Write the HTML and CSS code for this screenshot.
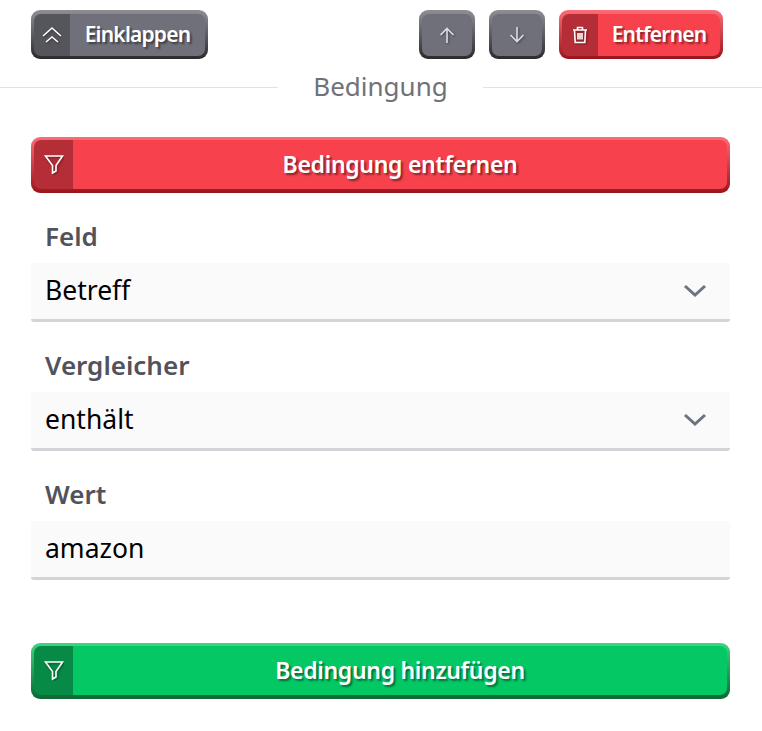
FILE: index.html
```html
<!DOCTYPE html>
<html lang="de">
<head>
    <meta charset="UTF-8">
    <title>Bedingung</title>
    <link rel="stylesheet" href="styles.css">
</head>
<body>
    <div class="toolbar">
        <button class="btn btn-grey btn-collapse">
            <span class="btn-icon">
                <svg width="20" height="20" viewBox="0 0 20 20"><path d="M1 11 10 3 19 11M4 17 10 12 16 17" /></svg>
            </span>
            <span class="btn-text">Einklappen</span>
        </button>
        <div class="toolbar-right">
            <button class="btn btn-grey btn-square">
                <span class="btn-face">
                    <svg width="20" height="20" viewBox="0 0 20 20"><path d="M10 18V3.500M3.500 10 10 3.500 16.500 10" /></svg>
                </span>
            </button>
            <button class="btn btn-grey btn-square">
                <span class="btn-face">
                    <svg width="20" height="20" viewBox="0 0 20 20"><path d="M10 2V16.500M3.500 10 10 16.500 16.500 10" /></svg>
                </span>
            </button>
            <button class="btn btn-red btn-remove">
                <span class="btn-icon">
                    <svg width="20" height="20" viewBox="0 0 20 20"><path d="M3 5h14M7.500 5V2.500h5V5M4.500 5l.7 12.500h9.600L15.500 5M8 8v6.500M10 8v6.500M12 8v6.500" /></svg>
                </span>
                <span class="btn-text">Entfernen</span>
            </button>
        </div>
    </div>

    <div class="divider"><span>Bedingung</span></div>

    <div class="form">
        <button class="btn btn-red btn-wide">
            <span class="btn-icon">
                <svg width="20" height="20" viewBox="0 0 20 20"><path d="M1.500 1H18.500L12 10.500V16L8.500 18V10.500Z" /></svg>
            </span>
            <span class="btn-text">Bedingung entfernen</span>
        </button>

        <div class="field">
            <label>Feld</label>
            <div class="input">
                Betreff
                <svg class="chevron" width="24" height="24" viewBox="0 0 24 24"><path d="M2 7 12 16 22 7" /></svg>
            </div>
        </div>
        <div class="field">
            <label>Vergleicher</label>
            <div class="input">
                enthält
                <svg class="chevron" width="24" height="24" viewBox="0 0 24 24"><path d="M2 7 12 16 22 7" /></svg>
            </div>
        </div>
        <div class="field">
            <label>Wert</label>
            <div class="input">amazon</div>
        </div>

        <button class="btn btn-green btn-wide btn-add">
            <span class="btn-icon">
                <svg width="20" height="20" viewBox="0 0 20 20"><path d="M1.500 1H18.500L12 10.500V16L8.500 18V10.500Z" /></svg>
            </span>
            <span class="btn-text">Bedingung hinzufügen</span>
        </button>
    </div>
</body>
</html>
```

FILE: styles.css
```css
* {
    box-sizing: border-box;
}
body {
    margin: 0;
    background: #fff;
    font-family: "Noto Sans", "Open Sans", sans-serif;
}
.toolbar {
    display: flex;
    justify-content: space-between;
    padding: 10px 39px 0 31px;
}
.toolbar-right {
    display: flex;
    gap: 14px;
}
.btn {
    display: flex;
    align-items: stretch;
    padding: 4px 3px 3px;
    border: none;
    border-radius: 9px;
    color: #fff;
    font-family: inherit;
    font-size: 21px;
    font-weight: 600;
    letter-spacing: -0.8px;
    text-shadow: 2px 2px 2px rgba(0, 0, 0, 0.45);
}
.btn svg path {
    fill: none;
    stroke: #fff;
    stroke-width: 1.6;
    filter: drop-shadow(1px 1px 1px rgba(0, 0, 0, 0.4));
}
.btn-grey {
    background: linear-gradient(#8e8e95, #2b2b2e);
}
.btn-red {
    background: linear-gradient(#fb6d76, #9b141c);
}
.btn-green {
    background: linear-gradient(#3ed680, #0f6636);
}
.btn-icon {
    display: flex;
    align-items: center;
    justify-content: center;
    border-radius: 7px 0 0 7px;
}
.btn-text {
    flex: 1;
    display: flex;
    align-items: center;
    justify-content: center;
    padding-bottom: 2px;
    border-radius: 0 7px 7px 0;
}
.btn-face {
    flex: 1;
    display: flex;
    align-items: center;
    justify-content: center;
    border-radius: 7px;
    background: #70707a;
}
.btn-grey .btn-icon {
    background: #55555c;
}
.btn-grey .btn-text {
    background: #70707a;
}
.btn-red .btn-icon {
    background: #b52d36;
}
.btn-red .btn-text {
    background: #f7414c;
}
.btn-green .btn-icon {
    background: #068a45;
}
.btn-green .btn-text {
    background: #04c864;
}
.btn-collapse {
    width: 177px;
    height: 49px;
}
.btn-collapse .btn-icon {
    width: 36px;
}
.btn-square {
    width: 56px;
    height: 49px;
}
.btn-square svg path {
    stroke: #dcdce0;
}
.btn-remove {
    width: 164px;
    height: 49px;
}
.btn-remove .btn-icon {
    width: 36px;
}
.divider {
    display: flex;
    align-items: center;
    margin-top: 10px;
    height: 36px;
    color: #71717a;
    font-size: 26px;
}
.divider::before,
.divider::after {
    content: "";
    height: 1px;
    background: #e2e2e4;
}
.divider::before {
    width: 278px;
}
.divider::after {
    flex: 1;
}
.divider span {
    width: 205px;
    padding-bottom: 2px;
    text-align: center;
}
.form {
    padding: 32px 32px 0 31px;
}
.btn-wide {
    width: 100%;
    height: 56px;
    padding: 3px 3px 4px;
    font-size: 23px;
    letter-spacing: -0.3px;
}
.btn-wide .btn-icon {
    width: 39px;
}
.field {
    margin-top: 24px;
}
.field label {
    display: block;
    height: 46px;
    padding: 0 14px;
    color: #52525b;
    font-size: 26px;
    font-weight: 600;
    line-height: 38px;
}
.input {
    display: flex;
    align-items: center;
    justify-content: space-between;
    height: 59px;
    padding: 0 23px 3px 14px;
    border-bottom: 3px solid #d4d4d8;
    border-radius: 3px;
    background: #fafafa;
    color: #000;
    font-size: 26.5px;
}
.chevron {
    margin-top: 3px;
}
.chevron path {
    fill: none;
    stroke: #6b7280;
    stroke-width: 3;
}
.btn-add {
    margin-top: 63px;
}
```
